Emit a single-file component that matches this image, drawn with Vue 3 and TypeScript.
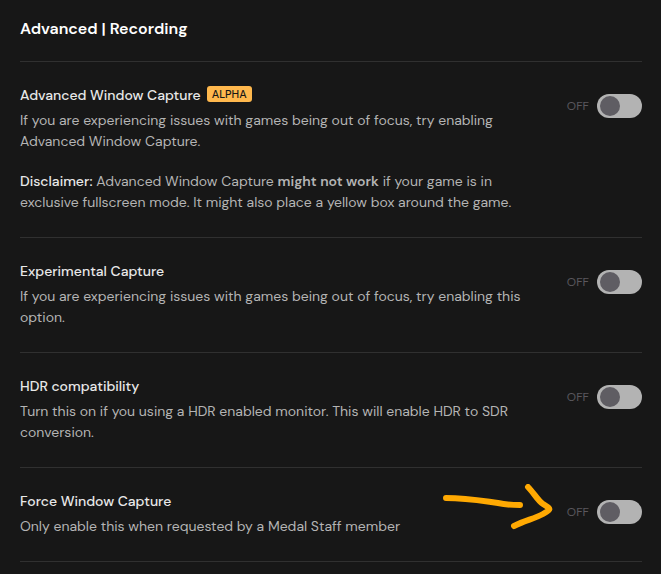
<script setup lang="ts">
import { ref } from 'vue'

interface Part {
  text: string
  tone?: 'lead' | 'strong'
}

interface Setting {
  id: string
  title: string
  badge?: string
  paragraphs: Part[][]
  enabled: boolean
  highlighted?: boolean
}

const settings = ref<Setting[]>([
  {
    id: 'advanced-window-capture',
    title: 'Advanced Window Capture',
    badge: 'ALPHA',
    paragraphs: [
      [
        {
          text: 'If you are experiencing issues with games being out of focus, try enabling Advanced Window Capture.',
        },
      ],
      [
        { text: 'Disclaimer:', tone: 'lead' },
        { text: ' Advanced Window Capture ' },
        { text: 'might not work', tone: 'strong' },
        {
          text: ' if your game is in exclusive fullscreen mode. It might also place a yellow box around the game.',
        },
      ],
    ],
    enabled: false,
  },
  {
    id: 'experimental-capture',
    title: 'Experimental Capture',
    paragraphs: [
      [
        {
          text: 'If you are experiencing issues with games being out of focus, try enabling this option.',
        },
      ],
    ],
    enabled: false,
  },
  {
    id: 'hdr-compatibility',
    title: 'HDR compatibility',
    paragraphs: [
      [
        {
          text: 'Turn this on if you using a HDR enabled monitor. This will enable HDR to SDR conversion.',
        },
      ],
    ],
    enabled: false,
  },
  {
    id: 'force-window-capture',
    title: 'Force Window Capture',
    paragraphs: [[{ text: 'Only enable this when requested by a Medal Staff member' }]],
    enabled: false,
    highlighted: true,
  },
])
</script>

<template>
  <main class="page">
    <h1 class="heading">Advanced | Recording</h1>
    <section v-for="item in settings" :key="item.id" class="row">
      <div class="info">
        <h2 class="title">
          <label :for="item.id">{{ item.title }}</label>
          <span v-if="item.badge" class="badge">{{ item.badge }}</span>
        </h2>
        <div class="body">
          <p v-for="(parts, i) in item.paragraphs" :key="i" class="text">
            <template v-for="(part, j) in parts" :key="j">
              <strong v-if="part.tone" :class="part.tone">{{ part.text }}</strong>
              <template v-else>{{ part.text }}</template>
            </template>
          </p>
        </div>
      </div>
      <div class="control">
        <span class="state">{{ item.enabled ? 'ON' : 'OFF' }}</span>
        <input :id="item.id" v-model="item.enabled" class="switch" type="checkbox" role="switch" />
        <svg v-if="item.highlighted" class="arrow" viewBox="0 0 112 48" aria-hidden="true">
          <path d="M5 14C26 14 42 17 57 19C66 21 70 21 79 21" />
          <path d="M87 3C93 9 97 17 102 20C110 25 111 25 102 30C93 35 85 36 73 42" />
        </svg>
      </div>
    </section>
  </main>
</template>

<style>
body {
  margin: 0;
  background: #171717;
}
</style>

<style scoped>
.page {
  padding: 0 19px 0 20px;
  color: #b4b4b4;
  font-family: 'DM Sans', Roboto, 'Liberation Sans', sans-serif;
  font-size: 14px;
}

.heading {
  margin: 0;
  padding: 17px 0 20px;
  color: #fff;
  font-size: 16px;
  font-weight: 600;
  line-height: 24px;
  border-bottom: 1px solid #303030;
}

.row {
  display: flex;
  justify-content: space-between;
  align-items: flex-start;
  gap: 32px;
  padding: 24px 0;
  border-bottom: 1px solid #303030;
}

.info {
  display: flex;
  flex-direction: column;
  gap: 6px;
  max-width: 504px;
}

.title {
  display: flex;
  align-items: flex-start;
  gap: 6px;
  margin: 0;
  color: #e8e8e8;
  font-size: 14px;
  font-weight: 500;
  line-height: 18px;
}

.badge {
  padding: 0 5px;
  border-radius: 3px;
  background: #ffb84d;
  color: #171717;
  font-size: 11px;
  font-weight: 500;
  line-height: 16px;
}

.body {
  display: flex;
  flex-direction: column;
  gap: 19px;
}

.text {
  margin: 0;
  line-height: 21px;
}

.lead {
  color: #e8e8e8;
  font-weight: 500;
}

.strong {
  font-weight: 600;
}

.control {
  position: relative;
  display: flex;
  align-items: center;
  gap: 8px;
  margin-top: 8px;
}

.state {
  color: #5a575e;
  font-size: 12px;
}

.switch {
  appearance: none;
  display: flex;
  align-items: center;
  width: 45px;
  height: 24px;
  margin: 0;
  padding: 0 3px;
  border-radius: 12px;
  background: #b3b3b3;
  cursor: pointer;
}

.switch::before {
  content: '';
  width: 20px;
  height: 20px;
  border-radius: 50%;
  background: #5f5d63;
}

.switch:checked {
  justify-content: flex-end;
  background: #ffb84d;
}

.arrow {
  position: absolute;
  right: 89px;
  top: -16px;
  width: 112px;
  height: 48px;
  fill: none;
  stroke: #ffa902;
  stroke-width: 6;
  stroke-linecap: round;
  stroke-linejoin: round;
  pointer-events: none;
}
</style>
